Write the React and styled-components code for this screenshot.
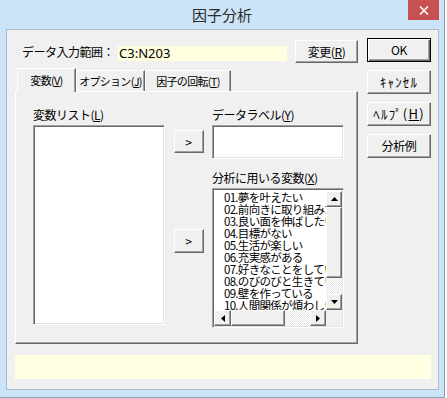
import React from 'react';
import styled, { createGlobalStyle, css } from 'styled-components';

const GlobalStyle = createGlobalStyle`
  * { box-sizing: border-box; }
  body {
    margin: 0;
    background: #fff;
    font-family: "Noto Sans CJK JP", "Noto Sans", sans-serif;
    font-size: 12px;
    color: #000;
  }
`;

const items = [
  '01.夢を叶えたい',
  '02.前向きに取り組みたい',
  '03.良い面を伸ばしたい',
  '04.目標がない',
  '05.生活が楽しい',
  '06.充実感がある',
  '07.好きなことをしている',
  '08.のびのびと生きている',
  '09.壁を作っている',
  '10.人間関係が煩わしい',
];

const raised = css`
  background: #f0f0f0;
  border: 1px solid;
  border-color: #fff #696969 #696969 #fff;
  box-shadow: inset -1px -1px #a0a0a0;
`;

const sunken = css`
  background: #fff;
  border: 1px solid;
  border-color: #a0a0a0 #fff #fff #a0a0a0;
  box-shadow: inset 1px 1px #696969, inset -1px -1px #e3e3e3;
`;

function Arrow({ dir }) {
  const vertical = dir === 'up' || dir === 'down';
  const pts = {
    up: '3.5,0 7,4 0,4',
    down: '0,0 7,0 3.5,4',
    left: '4,0 4,7 0,3.5',
    right: '0,0 0,7 4,3.5',
  }[dir];
  return (
    <svg width={vertical ? 7 : 4} height={vertical ? 4 : 7} viewBox={vertical ? '0 0 7 4' : '0 0 4 7'}>
      <polygon points={pts} fill="#000" />
    </svg>
  );
}

function Key({ children }) {
  return <>(<u>{children}</u>)</>;
}

export default function App() {
  return (
    <>
      <GlobalStyle />
      <Frame>
        <TitleBar>
          <Title>因子分析</Title>
          <CloseBtn>
            <svg width="10" height="9" viewBox="0 0 10 9">
              <path d="M1 0.5 L9 8.5 M9 0.5 L1 8.5" stroke="#fff" strokeWidth="1.6" />
            </svg>
          </CloseBtn>
        </TitleBar>
        <Client>
          <Main>
            <RangeRow>
              <RangeLabel>データ入力範囲：</RangeLabel>
              <RangeInput>C3:N203</RangeInput>
              <Button $w={63} $h={23}>変更<Key>R</Key></Button>
            </RangeRow>
            <TabStrip>
              <Tab $w={59} $active>変数<Key>V</Key></Tab>
              <Tab $w={69}>オプション<Key>J</Key></Tab>
              <Tab $w={86}>因子の回転<Key>T</Key></Tab>
            </TabStrip>
            <Panel>
              <Column>
                <FieldLabel>変数リスト<Key>L</Key></FieldLabel>
                <ListBox $h={200} />
              </Column>
              <MoveColumn>
                <Button $w={30} $h={23}>&gt;</Button>
                <Button $w={30} $h={24}>&gt;</Button>
              </MoveColumn>
              <Column>
                <FieldLabel>データラベル<Key>Y</Key></FieldLabel>
                <ListBox $h={34} />
                <FieldLabel $gap={12}>分析に用いる変数<Key>X</Key></FieldLabel>
                <VarList>
                  <Items>
                    {items.map((t) => (
                      <Item key={t}>{t}</Item>
                    ))}
                  </Items>
                  <VScroll>
                    <ScrollBtn $w={16} $h={16}><Arrow dir="up" /></ScrollBtn>
                    <Thumb $h={71} />
                    <Track />
                    <ScrollBtn $w={16} $h={16}><Arrow dir="down" /></ScrollBtn>
                  </VScroll>
                  <HScroll>
                    <ScrollBtn $w={17} $h={16}><Arrow dir="left" /></ScrollBtn>
                    <Thumb $w={54} />
                    <Track />
                    <ScrollBtn $w={16} $h={16}><Arrow dir="right" /></ScrollBtn>
                  </HScroll>
                  <Corner />
                </VarList>
              </Column>
            </Panel>
          </Main>
          <Side>
            <Button $w={64} $h={24} $default>OK</Button>
            <Button $w={64} $h={24} $kana>ｷｬﾝｾﾙ</Button>
            <Button $w={64} $h={24} $kana>ﾍﾙﾌﾟ<Key>H</Key></Button>
            <Button $w={64} $h={24}>分析例</Button>
          </Side>
          <StatusBar />
        </Client>
      </Frame>
    </>
  );
}

const Frame = styled.div`
  width: 445px;
  height: 398px;
  background: #cce4f7;
  border-right: 1px solid #8a9db1;
  border-bottom: 1px solid #8a9db1;
`;

const TitleBar = styled.div`
  height: 29px;
  display: grid;
  grid-template-columns: 1fr auto 1fr;
  align-items: start;
`;

const Title = styled.div`
  grid-column: 2;
  font-size: 15px;
  line-height: 29px;
  color: #2b2b2b;
`;

const CloseBtn = styled.div`
  justify-self: end;
  margin-right: 5px;
  width: 31px;
  height: 20px;
  background: #c75050;
  display: flex;
  align-items: center;
  justify-content: center;
`;

const Client = styled.div`
  margin: 0 5px 0 6px;
  height: 361px;
  border: 1px solid #a9bbcd;
  background: #f0f0f0;
  padding: 8px 7px 0 8px;
  display: grid;
  grid-template-columns: 343px 64px;
  grid-template-rows: 306px 24px;
  column-gap: 9px;
  row-gap: 11px;
`;

const Main = styled.div`
  display: flex;
  flex-direction: column;
`;

const RangeRow = styled.div`
  height: 25px;
  padding-top: 2px;
  display: flex;
  align-items: center;
  letter-spacing: -0.5px;
`;

const RangeLabel = styled.div`
  width: 96px;
  margin-left: 7px;
  line-height: 14px;
  white-space: nowrap;
`;

const RangeInput = styled.div`
  align-self: flex-end;
  margin-bottom: 2px;
  width: 169px;
  height: 15px;
  margin-right: 8px;
  background: #ffffe0;
  font-family: "Noto Sans", sans-serif;
  font-size: 13px;
  line-height: 15px;
  letter-spacing: 0;
  padding-left: 1px;
`;

const Button = styled.div`
  ${raised};
  width: ${(p) => p.$w}px;
  height: ${(p) => p.$h}px;
  display: flex;
  align-items: center;
  justify-content: center;
  line-height: 14px;
  letter-spacing: ${(p) => (p.$kana ? '1.2px' : '-0.4px')};
  font-size: ${(p) => (p.$kana ? 13 : 12)}px;
  white-space: nowrap;
  ${(p) =>
    p.$default &&
    css`
      border: 1px solid #000;
      box-shadow: inset 1px 1px #fff, inset -1px -1px #696969, inset -2px -2px #a0a0a0;
    `}
`;

const TabStrip = styled.div`
  margin-top: 5px;
  height: 23px;
  padding-left: 2px;
  display: flex;
  align-items: flex-end;
`;

const Tab = styled.div`
  width: ${(p) => p.$w}px;
  height: ${(p) => (p.$active ? 24 : 21)}px;
  margin-bottom: ${(p) => (p.$active ? -1 : 0)}px;
  position: relative;
  z-index: ${(p) => (p.$active ? 1 : 0)};
  background: #f0f0f0;
  border-top: 1px solid #fff;
  border-left: 1px solid #fff;
  border-right: 1px solid #696969;
  box-shadow: inset -1px 0 #a0a0a0;
  display: flex;
  align-items: center;
  justify-content: center;
  padding-bottom: ${(p) => (p.$active ? 2 : 0)}px;
  font-size: 11px;
  line-height: 14px;
  letter-spacing: -0.7px;
  white-space: nowrap;
`;

const Panel = styled.div`
  height: 253px;
  border: 1px solid;
  border-color: #fff #696969 #696969 #fff;
  box-shadow: inset -1px -1px #a0a0a0;
  padding: 16px 13px 0 17px;
  display: grid;
  grid-template-columns: 132px 47px 132px;
  align-items: start;
`;

const Column = styled.div`
  display: flex;
  flex-direction: column;
`;

const MoveColumn = styled.div`
  padding-top: 22px;
  display: flex;
  flex-direction: column;
  align-items: center;
  gap: 76px;
`;

const FieldLabel = styled.div`
  height: 14px;
  line-height: 14px;
  margin-top: ${(p) => p.$gap || 0}px;
  margin-bottom: 3px;
  letter-spacing: -0.5px;
  white-space: nowrap;
`;

const ListBox = styled.div`
  ${sunken};
  height: ${(p) => p.$h}px;
`;

const VarList = styled.div`
  ${sunken};
  height: 140px;
  padding: 1px;
  display: grid;
  grid-template-columns: 1fr 16px;
  grid-template-rows: 1fr 16px;
`;

const Items = styled.div`
  overflow: hidden;
  padding: 1px 0 0 10px;
`;

const Item = styled.div`
  height: 12px;
  font-size: 11.5px;
  line-height: 12px;
  white-space: nowrap;
  letter-spacing: -0.7px;
`;

const VScroll = styled.div`
  display: flex;
  flex-direction: column;
  padding-top: 1px;
`;

const HScroll = styled.div`
  display: flex;
`;

const ScrollBtn = styled.div`
  ${raised};
  flex: none;
  width: ${(p) => p.$w}px;
  height: ${(p) => p.$h}px;
  display: flex;
  align-items: center;
  justify-content: center;
`;

const Thumb = styled.div`
  ${raised};
  flex: none;
  width: ${(p) => (p.$w ? `${p.$w}px` : 'auto')};
  height: ${(p) => (p.$h ? `${p.$h}px` : 'auto')};
`;

const Track = styled.div`
  flex: 1;
  background: repeating-conic-gradient(#fff 0 25%, #e8e8e8 0 50%) 0 0 / 2px 2px;
`;

const Corner = styled.div`
  background: #f0f0f0;
`;

const Side = styled.div`
  display: flex;
  flex-direction: column;
  gap: 8px;
`;

const StatusBar = styled.div`
  grid-column: 1 / -1;
  background: #ffffe1;
`;
